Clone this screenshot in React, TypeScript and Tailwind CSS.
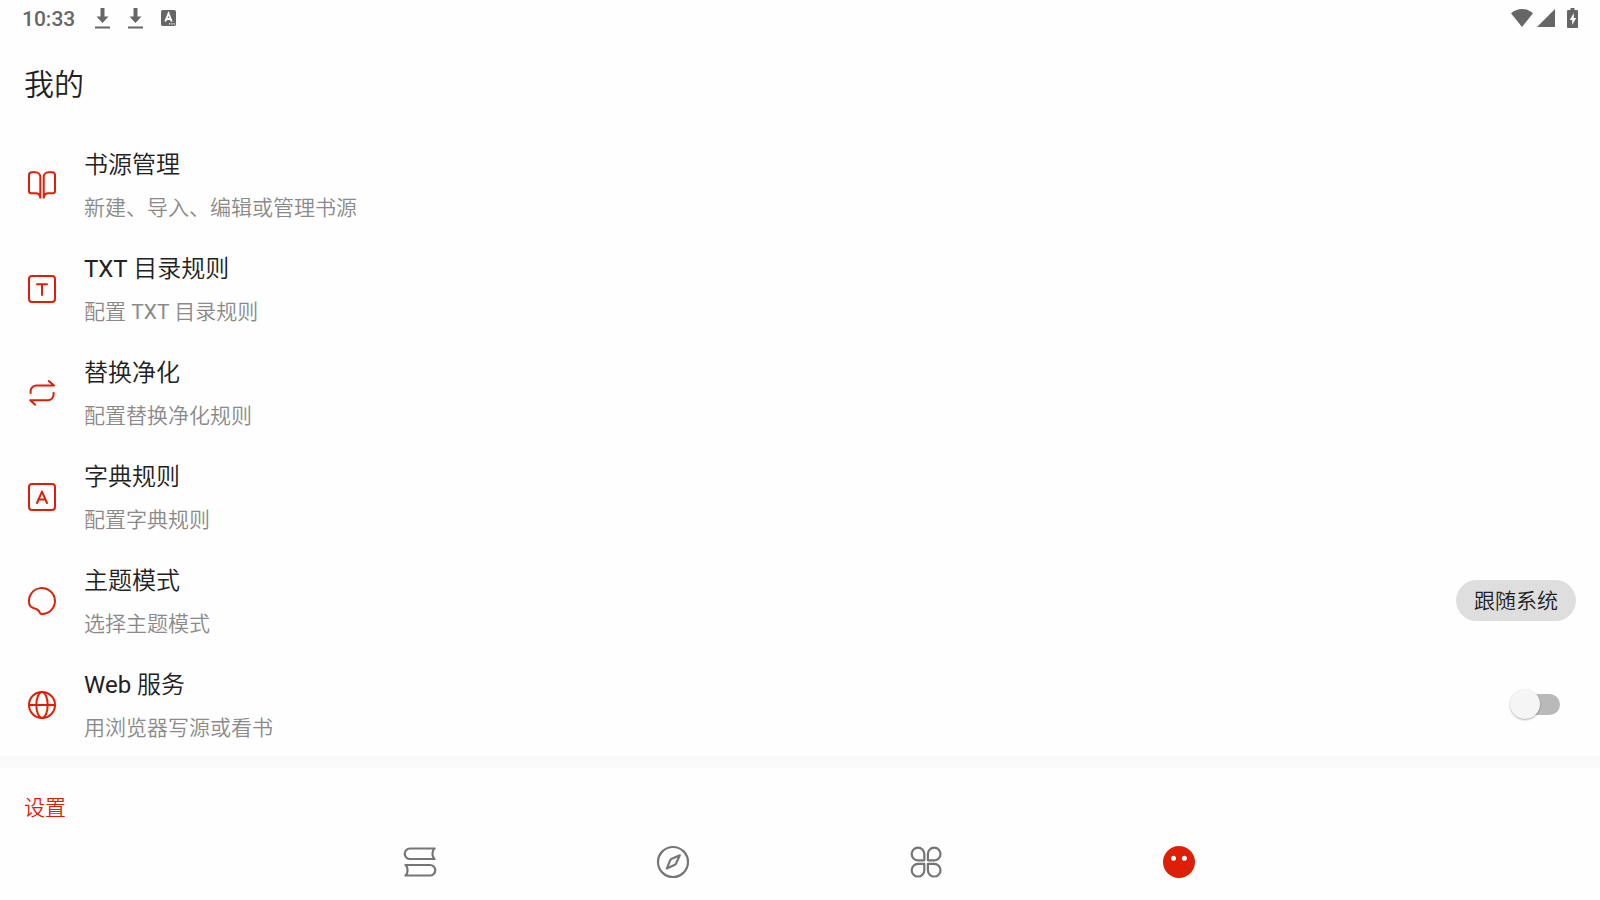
import type { ReactNode } from "react";

type IconProps = { children: ReactNode; strokeWidth?: number };

function Icon({ children, strokeWidth = 2 }: IconProps) {
  return (
    <svg
      aria-hidden="true"
      width="36"
      height="36"
      viewBox="0 0 36 36"
      fill="none"
      stroke="currentColor"
      strokeWidth={strokeWidth}
      strokeLinecap="round"
      strokeLinejoin="round"
      className="shrink-0"
    >
      {children}
    </svg>
  );
}

const bookIcon = (
  <Icon>
    <path d="M16.300 31.500V10a4.800 4.800 0 0 0-4.800-4.800H7.800A2.800 2.800 0 0 0 5 8v16a2.200 2.200 0 0 0 2.200 2.200h4.400c3 0 4.700 1.600 4.700 4.800" strokeLinecap="butt" />
    <path d="M19.700 31.500V10a4.800 4.800 0 0 1 4.800-4.800h3.700A2.800 2.800 0 0 1 31 8v16a2.200 2.200 0 0 1-2.200 2.200h-4.400c-3 0-4.700 1.600-4.700 4.800" strokeLinecap="butt" />
  </Icon>
);

const textIcon = (
  <Icon>
    <rect x="5" y="5" width="26" height="26" rx="3" />
    <path d="M13 13.300h10M18 13.300V24" />
  </Icon>
);

const swapIcon = (
  <Icon>
    <path d="M6.600 18v-1.700a5.800 5.800 0 0 1 5.800-5.800H30L24.800 6" />
    <path d="M29.600 17.800v1.700a5.800 5.800 0 0 1-5.800 5.800H6.200l5 4.400" />
  </Icon>
);

const dictIcon = (
  <Icon>
    <rect x="5" y="5" width="26" height="26" rx="3" />
    <path d="M13 24l5-11.400L23 24M14.800 20.400h6.400" />
  </Icon>
);

const themeIcon = (
  <Icon>
    <path d="M18 31A13 13 0 1 0 5.200 20.600c.5 2.400 2.200 4 4.600 4.600 3 .7 5 1.500 5.900 4.300.3 1 1 1.500 2.300 1.500z" />
  </Icon>
);

const globeIcon = (
  <Icon>
    <circle cx="18" cy="18" r="13" />
    <ellipse cx="18" cy="18" rx="5.700" ry="13" />
    <path d="M5 18h26" />
  </Icon>
);

type Item = { icon: ReactNode; title: string; note: string; control?: ReactNode };

const items: Item[] = [
  { icon: bookIcon, title: "书源管理", note: "新建、导入、编辑或管理书源" },
  { icon: textIcon, title: "TXT 目录规则", note: "配置 TXT 目录规则" },
  { icon: swapIcon, title: "替换净化", note: "配置替换净化规则" },
  { icon: dictIcon, title: "字典规则", note: "配置字典规则" },
  {
    icon: themeIcon,
    title: "主题模式",
    note: "选择主题模式",
    control: (
      <select
        aria-label="主题模式"
        className="h-[41px] w-[120px] appearance-none rounded-full bg-[#dedede] pt-px text-center text-[21px] leading-10 text-[#212121]"
      >
        <option>跟随系统</option>
      </select>
    ),
  },
  {
    icon: globeIcon,
    title: "Web 服务",
    note: "用浏览器写源或看书",
    control: (
      <label className="relative mr-4 flex h-[30px] w-[50px] items-center">
        <input type="checkbox" role="switch" aria-label="Web 服务" className="peer sr-only" />
        <span className="ml-1 h-[21px] w-full rounded-full bg-[#b9b9b9] peer-checked:bg-[#f09a8f]" />
        <span className="absolute left-0 size-[30px] rounded-full bg-[#f5f5f5] shadow-[0_1px_2px_rgba(0,0,0,0.3)] peer-checked:left-5 peer-checked:bg-[#de1f08]" />
      </label>
    ),
  },
];

const tabs = [
  {
    label: "书架",
    icon: (
      <Icon strokeWidth={2.2}>
        <path d="M32.600 4.500H8a5.200 5.200 0 0 0 0 10.500h24.600M32.400 4.500c-2.600 2.400-2.600 8 0 10.500" />
        <path d="M3.400 21H28a5.200 5.200 0 0 1 0 10.500H3.400M3.600 21c2.600 2.400 2.600 8 0 10.500" />
      </Icon>
    ),
  },
  {
    label: "发现",
    icon: (
      <Icon strokeWidth={2.2}>
        <circle cx="18" cy="18" r="15" />
        <path d="M24.800 11.300l-8 3.400c-.8.400-1.300.9-1.700 1.700l-3.300 8.200 7.600-3.500c.8-.4 1.300-.9 1.700-1.700z" />
      </Icon>
    ),
  },
  {
    label: "订阅",
    icon: (
      <Icon strokeWidth={2.2}>
        <path d="M16.300 16.300H10A6.300 6.300 0 1 1 16.300 10z" />
        <path d="M19.900 16.300H26.200A6.300 6.300 0 1 0 19.900 10z" />
        <path d="M16.300 19.900H10A6.300 6.300 0 1 0 16.300 26.200z" />
        <path d="M19.900 19.900H26.200A6.300 6.300 0 1 1 19.900 26.200z" />
      </Icon>
    ),
  },
  {
    label: "我的",
    active: true,
    icon: (
      <Icon>
        <circle cx="18" cy="18" r="16" fill="currentColor" stroke="none" />
        <circle cx="12.500" cy="14.300" r="2.500" fill="#fff" stroke="none" />
        <circle cx="23.400" cy="14.300" r="2.500" fill="#fff" stroke="none" />
      </Icon>
    ),
  },
];

function DownloadMark() {
  return (
    <svg aria-hidden="true" width="15" height="21" viewBox="0 0 15 21" fill="currentColor">
      <path d="M5.500 0h4v8.500H13.500L7.500 15 1.500 8.500h4zM0 18.500h15v2H0z" />
    </svg>
  );
}

function StatusBar() {
  return (
    <div className="flex h-9 items-center justify-between pr-[22px] pl-[22px] text-[#666666]">
      <div className="flex items-center">
        <span className="mr-5 pt-0.5 text-[21px] leading-6 font-medium">10:33</span>
        <span className="flex items-center gap-[18px]">
          <DownloadMark />
          <DownloadMark />
          <svg aria-hidden="true" width="15" height="16" viewBox="0 0 15 16">
            <rect width="15" height="16" rx="1.800" fill="currentColor" />
            <path d="M4.300 11.500l3.200-8 3.200 8M5.500 9h4" fill="none" stroke="#fff" strokeWidth="1.900" />
            <path d="M8 13.300h1.200v1.200H8zM10.300 13.300h1.200v1.200h-1.200zM12.500 13.300h1.200v1.200h-1.200z" fill="#fff" />
          </svg>
        </span>
      </div>
      <div className="flex items-center gap-1">
        <svg aria-hidden="true" width="22" height="18" viewBox="0 0 22 18" fill="currentColor">
          <path d="M11 18L0 4.300C3 1.600 6.800 0 11 0s8 1.600 11 4.300z" />
        </svg>
        <svg aria-hidden="true" width="18" height="18" viewBox="0 0 18 18" fill="currentColor">
          <path d="M18 0v18H0z" />
        </svg>
        <svg aria-hidden="true" width="11" height="20" viewBox="0 0 11 20" className="ml-2">
          <path d="M3.500 0h4v2H10a1 1 0 0 1 1 1v16a1 1 0 0 1-1 1H1a1 1 0 0 1-1-1V3a1 1 0 0 1 1-1h2.500z" fill="currentColor" />
          <path d="M6.800 5L2.800 12h2.400v5l4-7H6.800z" fill="#fff" />
        </svg>
      </div>
    </div>
  );
}

export default function App() {
  return (
    <div className="flex min-h-screen flex-col bg-[#fefefe] font-['Roboto','Noto_Sans_CJK_SC_DemiLight','Noto_Sans_CJK_SC',sans-serif] text-[#212121]">
      <StatusBar />
      <header className="flex h-24 items-center px-6 pt-0.5">
        <h1 className="text-[30px] leading-10">我的</h1>
      </header>
      <main className="flex-1">
        <ul>
          {items.map((item) => (
            <li key={item.title} className="flex h-[104px] items-center gap-6 px-6">
              <span className="pt-0.5 text-[#de1f08]">{item.icon}</span>
              <div className="flex flex-1 flex-col gap-[11px] pt-[5px]">
                <h2 className="text-[24px] leading-8">{item.title}</h2>
                <p className="text-[21px] leading-8 text-[#8a8a8a]">{item.note}</p>
              </div>
              {item.control}
            </li>
          ))}
        </ul>
        <div className="h-3 bg-[#f9f9f9]" />
        <h2 className="px-6 pt-6 text-[21px] leading-8 text-[#de1f08]">设置</h2>
      </main>
      <nav className="flex justify-center pr-0.5">
        <div className="grid h-[76px] w-full max-w-[1012px] grid-cols-4">
          {tabs.map((tab) => (
            <button
              key={tab.label}
              type="button"
              aria-label={tab.label}
              aria-current={tab.active ? "page" : undefined}
              className={`flex items-center justify-center ${tab.active ? "text-[#de1f08]" : "text-[#757575]"}`}
            >
              {tab.icon}
            </button>
          ))}
        </div>
      </nav>
    </div>
  );
}
